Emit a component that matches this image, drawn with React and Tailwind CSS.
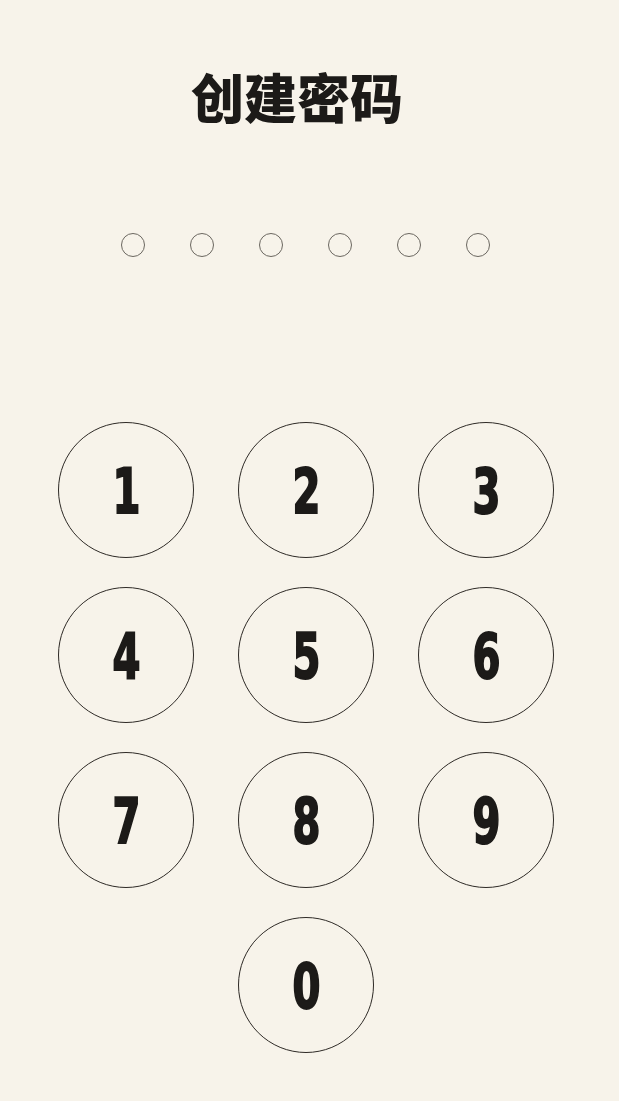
import React from "react";

export default function App() {
  const keys = ["1", "2", "3", "4", "5", "6", "7", "8", "9"];
  const Key = ({ d }) => (
    <button className="w-[136px] h-[136px] rounded-full border-[1.75px] border-[#2e2a26] flex items-center justify-center bg-transparent">
      <span
        className="text-[62px] leading-none font-bold text-[#1c1a18] scale-x-[0.72] inline-block mt-[3px]"
        style={{ fontFamily: '"DejaVu Sans Condensed", "DejaVu Sans", sans-serif', WebkitTextStroke: "2px #1c1a18" }}
      >
        {d}
      </span>
    </button>
  );
  return (
    <div className="w-[619px] h-[1101px] bg-[#f7f3ea] flex flex-col items-center overflow-hidden">
      <h1
        className="mt-[70px] mr-[25px] text-[53px] leading-none font-black text-[#1c1a18]"
        style={{ fontFamily: '"Noto Sans CJK SC", "Noto Sans", sans-serif' }}
      >
        创建密码
      </h1>
      <div className="mt-[110px] mr-[8px] flex gap-[45px]">
        {[0, 1, 2, 3, 4, 5].map((i) => (
          <div key={i} className="w-[24px] h-[24px] rounded-full border-[1.75px] border-[#6b6760]" />
        ))}
      </div>
      <div className="mt-[165px] mr-[7px] grid grid-cols-3 gap-x-[44px] gap-y-[29px]">
        {keys.map((k) => (
          <Key key={k} d={k} />
        ))}
        <div />
        <Key d="0" />
        <div />
      </div>
    </div>
  );
}
